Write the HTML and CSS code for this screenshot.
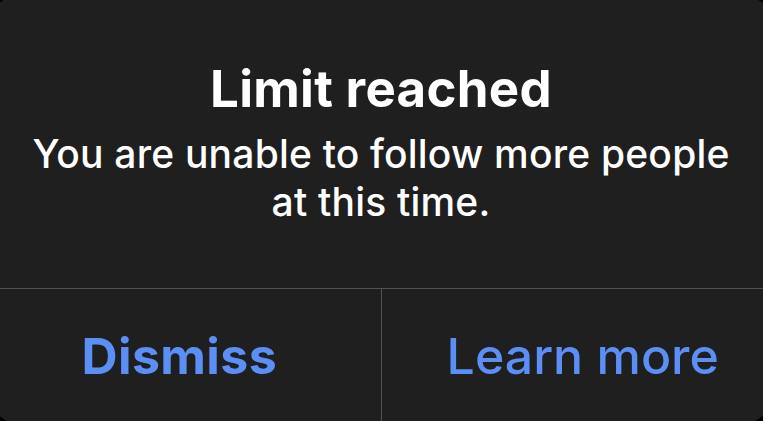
FILE: index.html
```html
<!DOCTYPE html>
<html lang="en">
<head>
  <meta charset="UTF-8" />
  <meta name="viewport" content="width=device-width, initial-scale=1.0" />
  <title>Limit reached</title>
  <link rel="stylesheet" href="styles.css">
</head>
<body>
  <div class="alert" role="alertdialog">
    <div class="alert-content">
      <h1 class="alert-title">Limit reached</h1>
      <p class="alert-message">You are unable to follow more people at this time.</p>
    </div>
    <div class="alert-actions">
      <button class="alert-btn alert-btn-bold">Dismiss</button>
      <button class="alert-btn">Learn more</button>
    </div>
  </div>
</body>
</html>
```

FILE: styles.css
```css
:root {
  --sheet: #201f20;
  --line: #525153;
  --blue: #5b8ff6;
  --text: #fff;
}
body {
  margin: 0;
  background: #000;
  overflow: hidden;
  font-family: Inter, "Noto Sans", sans-serif;
  color: var(--text);
}
/* the sheet is a bit bigger than the window, so only the corner tips show */
.alert {
  margin: -9px 0 0 -22px;
  width: 806px;
  height: 437px;
  border-radius: 56px;
  background: var(--sheet);
  display: flex;
  flex-direction: column;
  overflow: hidden;
}
.alert-content {
  height: 297px;
  padding-top: 69px;
  box-sizing: border-box;
  text-align: center;
}
.alert-title {
  margin: 0;
  font-size: 51px;
  line-height: 58px;
  font-weight: 700;
  letter-spacing: 0.3px;
}
.alert-message {
  max-width: 716px;
  margin: 12px auto 0;
  font-size: 39px;
  line-height: 48px;
  font-weight: 500;
  letter-spacing: 0.2px;
}
.alert-actions {
  flex: 1;
  display: flex;
  border-top: 1px solid var(--line);
}
.alert-btn {
  flex: 1;
  background: none;
  border: none;
  padding: 0 0 6px;
  font-family: inherit;
  font-size: 50px;
  font-weight: 500;
  color: var(--blue);
}
.alert-btn + .alert-btn { border-left: 1px solid var(--line); }
.alert-btn-bold { font-weight: 700; letter-spacing: 0.4px; }
```
